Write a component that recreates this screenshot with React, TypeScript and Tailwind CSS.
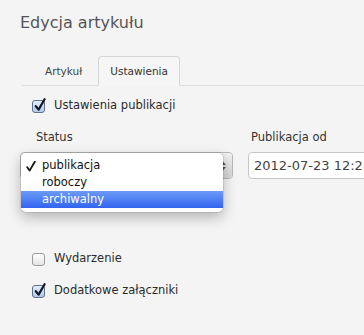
import * as React from 'react';

// Mac-style checkbox
function Checkbox({ checked }: { checked: boolean }) {
  return (
    <span
      className={
        checked
          ? 'relative inline-block w-[13px] h-[13px] rounded-[3px] border border-[#5f7190] bg-linear-to-b from-[#e4eefb] to-[#b4c9e8] shadow-[0_1px_0_rgba(255,255,255,0.8)]'
          : 'relative inline-block w-[13px] h-[13px] rounded-[3px] border border-[#9a9a9a] bg-linear-to-b from-white to-[#e4e4e4] shadow-[0_1px_0_rgba(255,255,255,0.8)]'
      }
    >
      {checked && (
        <svg className="absolute -top-[3px] left-[1px]" width="12" height="14" viewBox="0 0 12 14">
          <path d="M1.8 8.2 L4.6 11.6 L10.6 1.2" fill="none" stroke="#111827" strokeWidth="2.2" strokeLinecap="round" strokeLinejoin="round" />
        </svg>
      )}
    </span>
  );
}

function CheckRow({ checked, label }: { checked: boolean; label: string }) {
  return (
    <div className="flex items-center h-[16px] pl-3 gap-[9px]">
      <Checkbox checked={checked} />
      <span className="text-[11.5px] text-[#2b2b2b]">{label}</span>
    </div>
  );
}

const options = ['publikacja', 'roboczy', 'archiwalny'];

export default function App() {
  return (
    <div className="w-[364px] h-[335px] overflow-hidden bg-[#f4f4f4] font-['DejaVu_Sans',sans-serif] pt-[13px] pl-5">
      {/* Header */}
      <h1 className="text-[16px] leading-[20px] text-[#555]">Edycja artykułu</h1>

      {/* Tabs */}
      <div className="mt-[23px] ml-[2px] flex items-end gap-[4px] pl-[11px] border-b border-[#dcdcdc]">
        <div className="h-[29px] px-[12px] flex items-center pt-[3px] text-[10.5px] text-[#444]">Artykuł</div>
        <div className="-mb-px h-[30px] px-[11px] flex items-center pt-[2px] text-[10.5px] text-[#333] bg-[#f6f6f6] border border-[#d6d6d6] border-b-[#f6f6f6] rounded-t-[4px]">
          Ustawienia
        </div>
      </div>

      {/* Content */}
      <div className="mt-[12px]">
        <CheckRow checked label="Ustawienia publikacji" />
      </div>

      <div className="mt-[16px] flex">
        <div className="w-[213px] shrink-0">
          <div className="pl-4 text-[11.5px] leading-[14px] text-[#333]">Status</div>
          <div className="relative mt-[8px] h-[27px] flex rounded-[4px] border border-[#b9b9b9] bg-white">
            <div className="flex-1" />
            <div className="w-[20px] rounded-r-[4px] bg-linear-to-b from-[#f2f2f2] to-[#d7d7d7] border-l border-[#c4c4c4] flex flex-col items-center justify-center gap-[2px]">
              <svg width="7" height="4" viewBox="0 0 7 4"><path d="M0 4 L3.5 0 L7 4Z" fill="#555" /></svg>
              <svg width="7" height="4" viewBox="0 0 7 4"><path d="M0 0 L3.5 4 L7 0Z" fill="#555" /></svg>
            </div>

            {/* Open dropdown menu */}
            <div className="absolute left-[0px] top-0 w-[202px] py-[4px] rounded-[5px] bg-white shadow-[0_5px_14px_rgba(0,0,0,0.28),0_0_0_1px_rgba(0,0,0,0.08)]">
              {options.map((o, i) => (
                <div
                  key={o}
                  className={
                    i === 2
                      ? 'relative h-[17px] flex items-center pl-[21px] text-[11.5px] text-white bg-linear-to-b from-[#6d9af8] to-[#3263ef]'
                      : 'relative h-[17px] flex items-center pl-[21px] text-[11.5px] text-[#111]'
                  }
                >
                  {i === 0 && (
                    <svg className="absolute left-[5px] top-[4px]" width="10" height="11" viewBox="0 0 10 11">
                      <path d="M1.2 6.2 L3.6 9.6 L8.8 0.8" fill="none" stroke="#111" strokeWidth="1.8" strokeLinecap="round" strokeLinejoin="round" />
                    </svg>
                  )}
                  {o}
                </div>
              ))}
            </div>
          </div>
        </div>

        <div className="ml-[15px] shrink-0">
          <div className="pl-[3px] text-[11.5px] leading-[14px] text-[#333]">Publikacja od</div>
          <div className="mt-[8px] h-[27px] w-[160px] rounded-[4px] border border-[#c6c6c6] bg-white flex items-center pl-[5px] text-[13px] text-[#444] whitespace-nowrap overflow-hidden">
            2012-07-23 12:28
          </div>
        </div>
      </div>

      <div className="mt-[72px] flex flex-col gap-[16px]">
        <CheckRow checked={false} label="Wydarzenie" />
        <CheckRow checked label="Dodatkowe załączniki" />
      </div>
    </div>
  );
}
